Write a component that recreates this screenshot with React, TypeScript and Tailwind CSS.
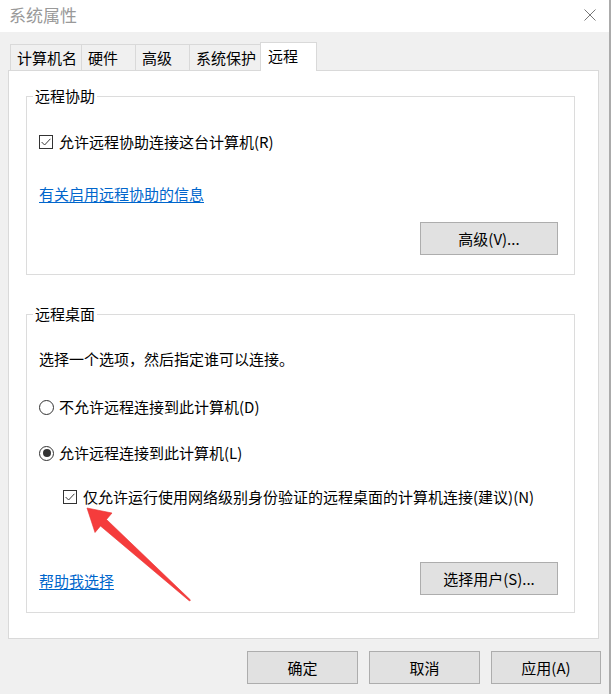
import React from 'react'

const tabs = [
  { label: '计算机名', w: 'w-[71px]' },
  { label: '硬件', w: 'w-[54px]' },
  { label: '高级', w: 'w-[54px]' },
  { label: '系统保护', w: 'w-[71px]' },
]

function CheckBox() {
  return (
    <span className="flex h-[14px] w-[14px] shrink-0 items-center justify-center border border-[#333] bg-white">
      <svg width="12" height="12" viewBox="0 0 12 12">
        <path d="M1.6 6 L4.6 9 L10.4 2.8" fill="none" stroke="#3a3a3a" strokeWidth="1" />
      </svg>
    </span>
  )
}

function Radio({ checked }: { checked?: boolean }) {
  return (
    <span className="flex h-[15px] w-[15px] shrink-0 items-center justify-center rounded-full border border-[#333] bg-white">
      {checked && <span className="h-[8px] w-[8px] rounded-full bg-[#333]" />}
    </span>
  )
}

function Button({ children, w }: { children: React.ReactNode; w: string }) {
  return (
    <button
      className={`${w} flex h-[33px] items-center justify-center border border-[#adadad] bg-[#e1e1e1] text-[15px] leading-[20px] text-black`}
    >
      {children}
    </button>
  )
}

function Link({ children, className = '' }: { children: React.ReactNode; className?: string }) {
  return (
    <a className={`text-[15px] leading-[20px] text-[#0066cc] underline underline-offset-2 ${className}`}>
      {children}
    </a>
  )
}

export default function App() {
  return (
    <div className="relative flex h-[694px] w-[611px] font-['Noto_Sans_CJK_SC',sans-serif] text-black">
      <div className="flex h-full w-[609px] flex-col bg-[#f0f0f0]">
        {/* title bar */}
        <div className="flex h-[32px] items-center justify-between bg-white pb-[2px] pl-[9px] pr-[13px]">
          <span className="text-[17px] leading-[20px] text-[#999]">系统属性</span>
          <svg width="12" height="12" viewBox="0 0 12 12">
            <path d="M0.5 0.5 L11.5 11.5 M11.5 0.5 L0.5 11.5" stroke="#777" strokeWidth="1" />
          </svg>
        </div>

        <div className="flex flex-col px-[8px] pt-[10px]">
          {/* tabs */}
          <div className="flex h-[28px] items-end pl-[2px]">
            {tabs.map((t) => (
              <div
                key={t.label}
                className={`${t.w} flex h-[26px] items-center border-l border-t border-[#d9d9d9] pl-[6px] text-[15px] leading-[20px]`}
              >
                {t.label}
              </div>
            ))}
            <div className="relative z-10 -mb-px flex h-[29px] w-[57px] items-start border-x border-t border-[#d9d9d9] bg-white pl-[7px] pt-[3px] text-[15px] leading-[20px]">
              远程
            </div>
          </div>

          {/* panel */}
          <div className="flex h-[569px] w-[591px] flex-col border border-[#d9d9d9] bg-white">
            <fieldset className="ml-[17px] mt-[15px] w-[549px] border border-[#dcdcdc] pb-[19px] pl-[12px] pr-[16px]">
              <legend className="-ml-[6px] px-[2px] text-[15px] leading-[20px]">远程协助</legend>
              <div className="mt-[26px] flex h-[20px] items-center gap-[6px] text-[15px] leading-[20px]">
                <CheckBox />
                <span>允许远程协助连接这台计算机(R)</span>
              </div>
              <div className="mt-[32px] flex">
                <Link>有关启用远程协助的信息</Link>
              </div>
              <div className="mt-[18px] flex justify-end">
                <Button w="w-[138px]">高级(V)...</Button>
              </div>
            </fieldset>

            <fieldset className="ml-[17px] mt-[29px] w-[549px] border border-[#dcdcdc] pb-[17px] pl-[12px] pr-[16px]">
              <legend className="-ml-[6px] px-[2px] text-[15px] leading-[20px]">远程桌面</legend>
              <div className="mt-[25px] h-[20px] text-[15px] leading-[20px]">选择一个选项，然后指定谁可以连接。</div>
              <div className="mt-[28px] flex h-[20px] items-center gap-[5px] text-[15px] leading-[20px]">
                <Radio />
                <span>不允许远程连接到此计算机(D)</span>
              </div>
              <div className="mt-[26px] flex h-[20px] items-center gap-[5px] text-[15px] leading-[20px]">
                <Radio checked />
                <span>允许远程连接到此计算机(L)</span>
              </div>
              <div className="mt-[24px] flex h-[20px] items-center gap-[6px] pl-[24px] text-[15px] leading-[20px]">
                <CheckBox />
                <span>仅允许运行使用网络级别身份验证的远程桌面的计算机连接(建议)(N)</span>
              </div>
              <div className="mt-[55px] flex items-end justify-between">
                <Link className="mb-[4px]">帮助我选择</Link>
                <Button w="w-[138px]">选择用户(S)...</Button>
              </div>
            </fieldset>
          </div>

          {/* dialog buttons */}
          <div className="mt-[12px] flex justify-end gap-[11px]">
            <Button w="w-[111px]">确定</Button>
            <Button w="w-[111px]">取消</Button>
            <Button w="w-[110px]">应用(A)</Button>
          </div>
        </div>
      </div>
      <div className="h-full w-[2px] bg-[#ababab]" />

      {/* annotation arrow */}
      <svg className="pointer-events-none absolute left-0 top-0" width="611" height="694" viewBox="0 0 611 694">
        <polygon
          points="87,508 112,513 106.5,519.5 190.5,600 189.5,601 100.5,526 95,532.5"
          fill="#f53c3c"
          stroke="#e83232"
          strokeWidth="0.6"
          strokeLinejoin="round"
        />
      </svg>
    </div>
  )
}
